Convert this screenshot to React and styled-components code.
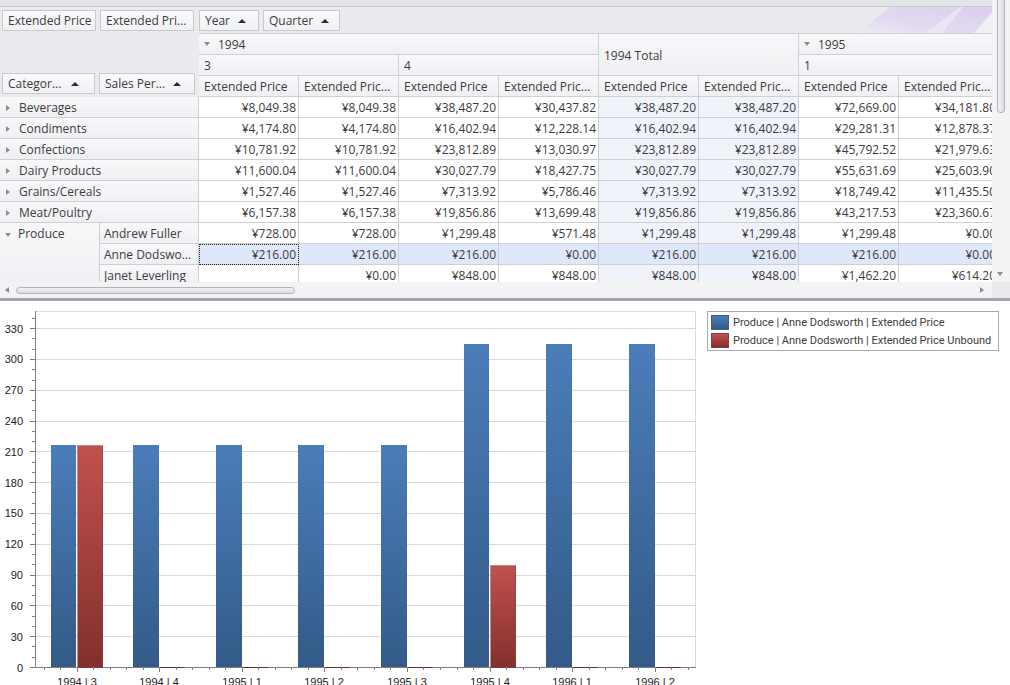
import React from 'react';
import styled, { createGlobalStyle, css } from 'styled-components';

const GlobalStyle = createGlobalStyle`
  html, body { margin: 0; padding: 0; background: #fff; }
  body { font-family: "Open Sans", "Noto Sans", "Liberation Sans", sans-serif; font-size: 12px; color: #3c3c3c; }
`;

const line = '#cfd0d4';
const headerFill = 'linear-gradient(#f8f8fa, #eff0f3)';

const rows = [
  { name: 'Beverages', values: [8049.38, 8049.38, 38487.2, 30437.82, 38487.2, 38487.2, 72669, 34181.8] },
  { name: 'Condiments', values: [4174.8, 4174.8, 16402.94, 12228.14, 16402.94, 16402.94, 29281.31, 12878.37] },
  { name: 'Confections', values: [10781.92, 10781.92, 23812.89, 13030.97, 23812.89, 23812.89, 45792.52, 21979.63] },
  { name: 'Dairy Products', values: [11600.04, 11600.04, 30027.79, 18427.75, 30027.79, 30027.79, 55631.69, 25603.9] },
  { name: 'Grains/Cereals', values: [1527.46, 1527.46, 7313.92, 5786.46, 7313.92, 7313.92, 18749.42, 11435.5] },
  { name: 'Meat/Poultry', values: [6157.38, 6157.38, 19856.86, 13699.48, 19856.86, 19856.86, 43217.53, 23360.67] },
];

const produce = [
  { name: 'Andrew Fuller', values: [728, 728, 1299.48, 571.48, 1299.48, 1299.48, 1299.48, 0] },
  { name: 'Anne Dodswo...', selected: true, values: [216, 216, 216, 0, 216, 216, 216, 0] },
  { name: 'Janet Leverling', values: [null, 0, 848, 848, 848, 848, 1462.2, 614.2] },
];

const money = (v) =>
  v === null ? '' : '¥' + v.toLocaleString('en-US', { minimumFractionDigits: 2, maximumFractionDigits: 2 });

const measures = ['Extended Price', 'Extended Pric...'];

function DataCells({ row }) {
  return row.values.map((v, i) => (
    <DataCell key={i} $total={i === 4 || i === 5} $selected={row.selected} $focused={row.selected && i === 0}>
      {money(v)}
    </DataCell>
  ));
}

function PivotGrid() {
  return (
    <Grid>
      <Corner>
        <FieldChip $width={93}>Categor... <SortArrow /></FieldChip>
        <FieldChip $width={96}>Sales Per... <SortArrow /></FieldChip>
      </Corner>

      <ColumnHead $span={4} $top><Collapse />1994</ColumnHead>
      <ColumnHead $span={2} $rows={2} $top>1994 Total</ColumnHead>
      <ColumnHead $span={2} $top><Collapse />1995</ColumnHead>

      <ColumnHead $span={2}>3</ColumnHead>
      <ColumnHead $span={2}>4</ColumnHead>
      <ColumnHead $span={2}>1</ColumnHead>

      {[0, 1, 2, 3].map((n) => measures.map((m) => <ColumnHead key={n + m}>{m}</ColumnHead>))}

      {rows.map((row) => (
        <React.Fragment key={row.name}>
          <RowHead $span={2}><Expand />{row.name}</RowHead>
          <DataCells row={row} />
        </React.Fragment>
      ))}

      <RowHead $rows={3}><Collapse />Produce</RowHead>
      {produce.map((row) => (
        <React.Fragment key={row.name}>
          <PersonHead>{row.name}</PersonHead>
          <DataCells row={row} />
        </React.Fragment>
      ))}
    </Grid>
  );
}

function Feather() {
  return (
    <FeatherArt viewBox="0 0 142 26" preserveAspectRatio="none">
      <defs>
        <linearGradient id="feather" x1="0" y1="1" x2="1" y2="0">
          <stop offset="0" stopColor="#efecf5" />
          <stop offset="0.35" stopColor="#e2daf0" />
          <stop offset="1" stopColor="#dacfee" />
        </linearGradient>
      </defs>
      <polygon points="8,26 40,0 142,0 142,6 124,26" fill="url(#feather)" />
      <polygon points="75,26 100,8 110,0 113,0 92,26" fill="#efebf6" opacity="0.7" />
      <polygon points="124,26 142,6 142,26" fill="#f1f0f5" />
    </FeatherArt>
  );
}

const PLOT = { left: 35, right: 696, top: 10, zero: 366 };
const UNIT = 1.0267;
const GROUP_STEP = 82.6;

const series = [
  ['1994 | 3', 216, 216],
  ['1994 | 4', 216, 0],
  ['1995 | 1', 216, 0],
  ['1995 | 2', 216, 0],
  ['1995 | 3', 216, 0],
  ['1995 | 4', 315, 99],
  ['1996 | 1', 315, 0],
  ['1996 | 2', 315, 0],
];

function Chart() {
  const y = (v) => PLOT.zero - v * UNIT;
  const yMajor = Array.from({ length: 12 }, (_, i) => i * 30);
  const yMinor = Array.from({ length: 35 }, (_, i) => i * 10).filter((v) => v % 30 !== 0);
  const xTicks = Array.from({ length: 41 }, (_, i) => PLOT.left + 8.5 + i * (GROUP_STEP / 5)).filter((x) => x < PLOT.right);

  return (
    <ChartSvg width="700" height="385" viewBox="0 0 700 385" shapeRendering="crispEdges">
      <defs>
        <linearGradient id="blueBar" x1="0" y1="0" x2="0" y2="1">
          <stop offset="0" stopColor="#4b7db9" />
          <stop offset="1" stopColor="#335a88" />
        </linearGradient>
        <linearGradient id="redBar" x1="0" y1="0" x2="0" y2="1">
          <stop offset="0" stopColor="#c0514e" />
          <stop offset="1" stopColor="#82302d" />
        </linearGradient>
      </defs>

      <path d={`M${PLOT.left} ${PLOT.top + 0.5}H${PLOT.right - 0.5}V${PLOT.zero}`} fill="none" stroke="#d9d9d9" />
      {yMajor.slice(1).map((v) => (
        <line key={v} x1={PLOT.left} x2={PLOT.right} y1={Math.round(y(v)) + 0.5} y2={Math.round(y(v)) + 0.5} stroke="#d9d9d9" />
      ))}

      <line x1={PLOT.left + 0.5} x2={PLOT.left + 0.5} y1={PLOT.top} y2={PLOT.zero + 1} stroke="#808080" />
      <line x1={PLOT.left} x2={PLOT.right} y1={PLOT.zero + 0.5} y2={PLOT.zero + 0.5} stroke="#808080" />

      {series.map(([label, blue, red], i) => {
        const center = Math.floor(77.1 + i * GROUP_STEP);
        return (
          <g key={label}>
            <rect x={center - 26} y={y(blue)} width={red > 0 ? 25 : 26} height={blue * UNIT} fill="url(#blueBar)" />
            {red > 0 ? (
              <rect x={center + 0.5} y={y(red) + 0.5} width="25" height={red * UNIT} fill="url(#redBar)" stroke="#7d4644" strokeOpacity="0.6" />
            ) : (
              <line x1={center} x2={center + 26} y1={PLOT.zero + 0.5} y2={PLOT.zero + 0.5} stroke="#6e2c2a" />
            )}
            <line x1={center + 0.5} x2={center + 0.5} y1={PLOT.zero} y2={PLOT.zero + 5} stroke="#808080" />
            <AxisText x={center} y="385" textAnchor="middle">{label}</AxisText>
          </g>
        );
      })}

      {yMinor.map((v) => (
        <line key={v} x1="32" x2="35" y1={Math.round(y(v)) + 0.5} y2={Math.round(y(v)) + 0.5} stroke="#808080" />
      ))}
      {yMajor.map((v) => (
        <g key={v}>
          <line x1="30" x2="35" y1={Math.round(y(v)) + 0.5} y2={Math.round(y(v)) + 0.5} stroke="#808080" />
          <AxisText x="23" y={y(v) + 4.5} textAnchor="end">{v}</AxisText>
        </g>
      ))}
      {xTicks.map((x) => (
        <line key={x} x1={Math.round(x) + 0.5} x2={Math.round(x) + 0.5} y1={PLOT.zero} y2={PLOT.zero + 3} stroke="#808080" />
      ))}
    </ChartSvg>
  );
}

export default function App() {
  return (
    <Page>
      <GlobalStyle />
      <TopPane>
        <PivotColumn>
          <TopStrip />
          <FilterBar>
            <Feather />
            <FieldChip $width={94}>Extended Price</FieldChip>
            <FieldChip $width={94}>Extended Pri...</FieldChip>
            <FieldChip $width={60} $gapBefore={1}>Year <SortArrow /></FieldChip>
            <FieldChip $width={77}>Quarter <SortArrow /></FieldChip>
          </FilterBar>
          <PivotGrid />
          <HScroll>
            <ArrowLeft />
            <HThumb />
            <ArrowRight />
          </HScroll>
        </PivotColumn>
        <VScroll>
          <VThumb />
          <ArrowDown />
          <ScrollCorner />
        </VScroll>
      </TopPane>
      <Splitter />
      <ChartPane>
        <Chart />
        <Legend>
          <LegendRow><Swatch $color="blue" />Produce | Anne Dodsworth | Extended Price</LegendRow>
          <LegendRow><Swatch $color="red" />Produce | Anne Dodsworth | Extended Price Unbound</LegendRow>
        </Legend>
      </ChartPane>
    </Page>
  );
}

const Page = styled.div`
  width: 1010px;
  height: 685px;
  overflow: hidden;
  display: flex;
  flex-direction: column;
`;

const TopPane = styled.div`
  display: flex;
  height: 298px;
  flex: none;
`;

const PivotColumn = styled.div`
  width: 992px;
  display: flex;
  flex-direction: column;
`;

const TopStrip = styled.div`
  height: 6px;
  background: #e3e4e8;
  border-bottom: 1px solid #c9cacf;
`;

const FilterBar = styled.div`
  position: relative;
  height: 26px;
  box-sizing: border-box;
  padding: 3px 0 0 2px;
  display: flex;
  align-items: flex-start;
  gap: 4px;
  background: #eaebef;
`;

const FeatherArt = styled.svg`
  position: absolute;
  right: 0;
  top: 0;
  width: 142px;
  height: 26px;
`;

const FieldChip = styled.div`
  width: ${(p) => p.$width}px;
  height: 21px;
  box-sizing: border-box;
  flex: none;
  margin-left: ${(p) => p.$gapBefore || 0}px;
  padding: 0 0 0 5px;
  display: flex;
  align-items: center;
  gap: 5px;
  white-space: pre;
  background: linear-gradient(#fafafb, #f0f1f4);
  border: 1px solid #c8c9cd;
`;

const SortArrow = styled.i`
  width: 0;
  height: 0;
  border-left: 4px solid transparent;
  border-right: 4px solid transparent;
  border-bottom: 4px solid #2b2b2b;
  margin-left: auto;
  margin-right: 15px;
`;

const Grid = styled.div`
  height: 249px;
  overflow: hidden;
  display: grid;
  grid-template-columns: 99px 100px repeat(8, 100px);
  grid-template-rows: 22px 21px 21px;
  grid-auto-rows: 21px;
  background: #fff;
`;

const Corner = styled.div`
  grid-column: 1 / span 2;
  grid-row: 1 / span 3;
  display: flex;
  align-items: flex-end;
  gap: 4px;
  padding: 0 0 3px 2px;
  background: #eaebef;
`;

const HeadBase = css`
  box-sizing: border-box;
  min-width: 0;
  white-space: nowrap;
  overflow: hidden;
  display: flex;
  align-items: center;
  background: ${headerFill};
`;

const ColumnHead = styled.div`
  ${HeadBase}
  padding-left: 5px;
  grid-column: span ${(p) => p.$span || 1};
  grid-row: span ${(p) => p.$rows || 1};
  border-right: 1px solid ${line};
  border-bottom: 1px solid ${line};
  ${(p) => p.$top && `border-top: 1px solid ${line};`}
  ${(p) => p.$rows && 'padding-top: 2px;'}
`;

const RowHead = styled.div`
  ${HeadBase}
  padding-left: 5px;
  align-items: flex-start;
  line-height: 22px;
  grid-column: span ${(p) => p.$span || 1};
  grid-row: span ${(p) => p.$rows || 1};
  border-bottom: 1px solid ${line};
  border-right: ${(p) => (p.$span ? `1px solid ${line}` : 'none')};
`;

const PersonHead = styled.div`
  ${HeadBase}
  padding-left: 4px;
  border-left: 1px solid ${line};
  border-right: 1px solid ${line};
  border-bottom: 1px solid ${line};
`;

const DataCell = styled.div`
  box-sizing: border-box;
  padding-right: 2px;
  text-align: right;
  line-height: 22px;
  white-space: nowrap;
  background: ${(p) => (p.$selected ? '#dfe7fa' : p.$total ? '#f0f3fa' : '#fff')};
  border-right: 1px solid ${line};
  border-bottom: 1px solid ${line};
  ${(p) => p.$focused && `outline: 1px dotted #222; outline-offset: -1px;`}
`;

const Expand = styled.i`
  flex: none;
  width: 0;
  height: 0;
  margin: 8px 9px 0 1px;
  border-top: 3.5px solid transparent;
  border-bottom: 3.5px solid transparent;
  border-left: 4px solid #8c8c8c;
`;

const Collapse = styled.i`
  flex: none;
  width: 0;
  height: 0;
  margin: 0 8px 0 0;
  border-left: 3.5px solid transparent;
  border-right: 3.5px solid transparent;
  border-top: 4px solid #8c8c8c;
  ${RowHead} & { margin: 10px 7px 0 0; }
`;

const HScroll = styled.div`
  height: 16px;
  display: flex;
  align-items: center;
  background: #f3f3f5;
  padding: 0 5px;
`;

const HThumb = styled.div`
  width: 279px;
  height: 7px;
  margin-left: 7px;
  border-radius: 4px;
  border: 1px solid #b4b5ba;
  box-sizing: border-box;
  background: linear-gradient(#f2f2f4, #dcdde1);
`;

const ArrowLeft = styled.i`
  width: 0;
  height: 0;
  border-top: 3.5px solid transparent;
  border-bottom: 3.5px solid transparent;
  border-right: 4px solid #8c8c8c;
`;

const ArrowRight = styled.i`
  width: 0;
  height: 0;
  margin-left: auto;
  margin-right: 3px;
  border-top: 3.5px solid transparent;
  border-bottom: 3.5px solid transparent;
  border-left: 4px solid #8c8c8c;
`;

const VScroll = styled.div`
  width: 18px;
  display: flex;
  flex-direction: column;
  background: #f3f3f5;
`;

const VThumb = styled.div`
  width: 8px;
  height: 113px;
  flex: none;
  margin-left: 5px;
  box-sizing: border-box;
  border: 1px solid #b4b5ba;
  border-top: none;
  border-radius: 0 0 4px 4px;
  background: linear-gradient(90deg, #f2f2f4, #dcdde1);
`;

const ArrowDown = styled.i`
  width: 0;
  height: 0;
  margin: 159px 0 0 5px;
  border-left: 3.5px solid transparent;
  border-right: 3.5px solid transparent;
  border-top: 4px solid #8c8c8c;
`;

const ScrollCorner = styled.div`
  margin-top: auto;
  height: 16px;
  background: #e9eaec;
`;

const Splitter = styled.div`
  height: 3px;
  flex: none;
  background: #a3a5ab;
`;

const ChartPane = styled.div`
  flex: 1;
  display: flex;
  align-items: flex-start;
  background: #fff;
  overflow: hidden;
`;

const ChartSvg = styled.svg`
  display: block;
  flex: none;
`;

const AxisText = styled.text`
  font-family: "Liberation Sans", Arial, sans-serif;
  font-size: 11px;
  fill: #222;
  white-space: pre;
`;

const Legend = styled.div`
  box-sizing: border-box;
  width: 292px;
  height: 40px;
  margin: 10px 0 0 7px;
  padding: 1px 3px;
  border: 1px solid #a9a9a9;
  font-family: Roboto, "Open Sans", sans-serif;
  font-size: 11px;
`;

const LegendRow = styled.div`
  display: flex;
  align-items: center;
  height: 18px;
  gap: 4px;
  white-space: nowrap;
`;

const Swatch = styled.span`
  width: 18px;
  height: 15px;
  flex: none;
  box-sizing: border-box;
  border: 1px solid ${(p) => (p.$color === 'blue' ? '#3b618f' : '#8e3f3d')};
  background: ${(p) =>
    p.$color === 'blue'
      ? 'linear-gradient(#4b7db9, #335a88)'
      : 'linear-gradient(#c0514e, #82302d)'};
`;
